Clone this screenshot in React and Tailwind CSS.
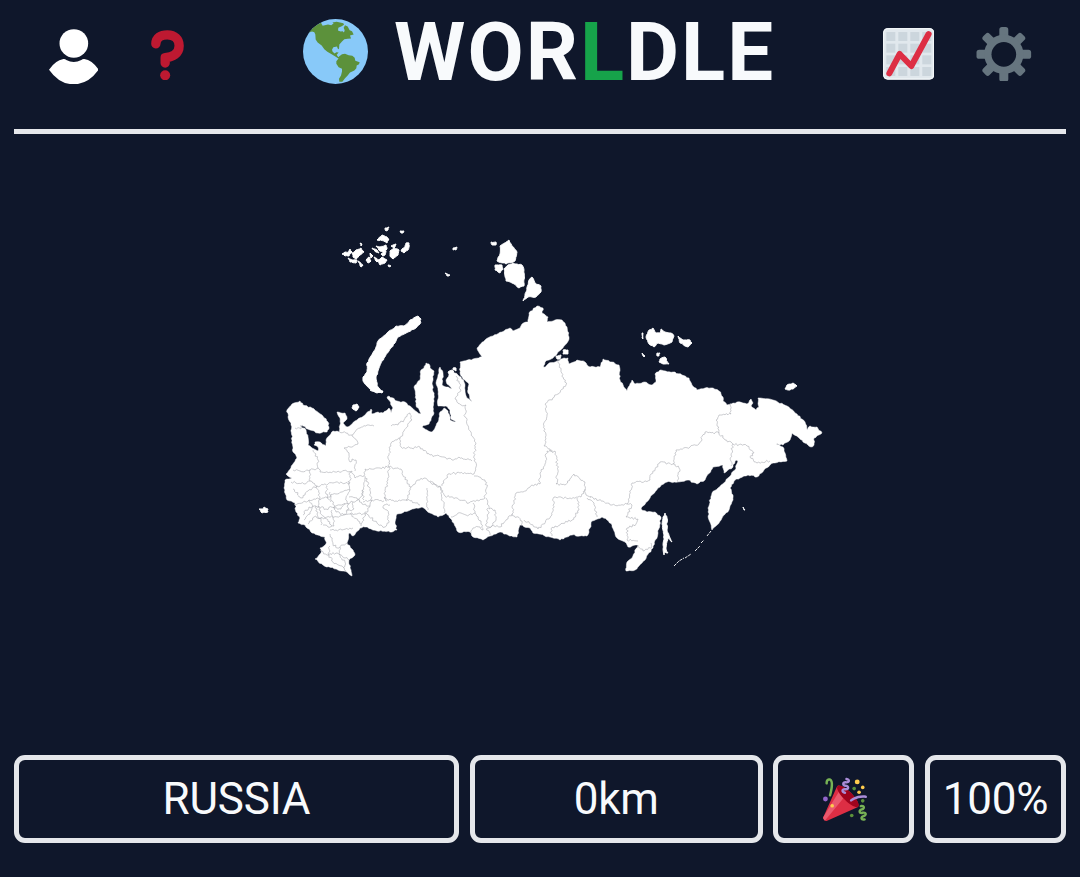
import React from "react";

/* ---------- map geometry ---------- */

const MAINLAND =
  "287,410 292,404 300,401 303,405 312,408 322,415 328,422 329,427 327,432 318,433 310,430 303,426 300,425 306,430 308,437 308,445 312,448 318,451 318,447 314,445 315,442 320,442 326,446 326,440 330,435 333,431 339,432 340,425 340,418 337,412 345,413 347,419 343,423 347,427 352,424 357,420 365,415 371,409 372,414 378,412 383,413 389,408 391,413 393,408 387,397 389,396 397,401 405,402 410,406 417,412 421,414 416,405 415,390 414,387 420,380 421,370 424,368 426,363 429,364 430,368 434,371 432,384 434,395 433,407 434,413 429,424 422,427 427,430 432,432 438,422 440,412 444,408 448,411 450,420 456,422 451,419 450,410 446,406 438,406 438,390 436,383 438,375 440,367 443,373 442,385 446,387 452,389 447,384 446,380 449,374 455,373 461,377 464,382 465,390 467,398 472,402 468,393 469,384 463,379 460,373 460,362 473,359 482,357 477,348 485,340 493,336 502,332 510,328 513,331 520,328 522,324 528,322 529,313 537,306 543,308 542,313 548,317 547,322 555,320 562,320 567,327 569,337 567,343 558,352 553,358 545,362 542,369 548,364 557,361 564,358 568,358 569,364 577,360 585,362 587,365 590,367 600,367 603,359 612,362 619,365 620,380 627,391 632,380 635,384 645,382 652,385 656,382 655,374 660,370 673,372 682,375 689,378 692,385 697,390 705,388 713,388 719,391 723,397 723,401 727,405 737,402 747,404 751,399 753,403 751,406 756,410 759,407 758,398 773,400 787,406 797,414 805,422 807,430 810,426 817,427 822,433 814,438 814,445 811,447 803,442 798,437 792,433 790,440 783,445 776,444 783,447 785,453 787,461 773,463 764,470 757,477 748,475 740,478 735,480 730,488 733,495 733,500 729,510 722,518 717,525 712,530 709,520 708,508 712,493 718,488 728,478 735,470 738,461 735,461 733,467 724,473 723,465 713,467 705,480 697,484 688,480 678,482 667,482 658,488 650,498 641,509 647,512 655,512 661,517 658,533 653,548 642,563 635,570 626,571 627,562 632,558 638,545 628,547 625,542 617,538 612,525 607,520 602,517 592,521 590,528 587,536 580,536 572,535 560,540 550,537 533,533 530,528 520,525 517,537 508,535 500,532 490,536 483,540 473,537 470,532 458,532 452,520 446,513 438,517 430,513 422,507 397,514 395,522 397,530 392,532 377,531 365,527 360,528 353,536 349,533 347,543 353,550 355,555 349,560 350,568 352,576 347,572 338,570 323,565 315,559 321,553 320,548 326,544 325,537 312,533 305,525 298,523 300,518 296,512 295,503 287,500 284,488 285,480 292,478 286,474 297,458 293,452 291,423 288,417";

const ISLANDS = [
  /* Novaya Zemlya */
  "418,316 421,319 420,324 416,328 408,332 398,337 395,343 389,351 384,358 379,368 376,378 378,387 383,392 377,393 370,389 367,386 363,381 363,377 367,372 367,363 371,356 376,347 378,341 387,333 396,326 404,326 410,320",
  /* Severnaya Zemlya */
  "509,240 512,246 517,252 515,261 506,264 497,261 500,254 500,246",
  "495,265 502,265 503,269 500,273 495,270",
  "504,269 508,265 513,263 517,264 522,265 524,270 524,286 519,288 512,283 506,281",
  "532,277 535,283 541,286 541,292 536,297 528,297 523,301 526,292 529,280",
  "491,242 496,242 496,245 492,245",
  "453,248 457,247 456,250 453,250",
  "445,273 450,275 447,276",
  /* New Siberian Islands */
  "649,330 653,328 656,333 660,333 661,329 665,332 671,333 674,336 672,342 664,345 658,343 654,347 649,344 646,337",
  "678,336 683,340 690,340 692,343 688,347 680,343",
  "642,333 643,333 643,339 642,338",
  "642,353 645,356 644,357",
  "657,353 660,353 659,356 657,356",
  "660,359 665,357 669,364 663,364 659,362",
  /* Wrangel */
  "785,389 787,385 793,383 797,386 793,389 788,390",
  /* Kolguyev, Vaygach */
  "353,405 357,404 359,407 356,411 352,408",
  "370,390 377,391 383,391 382,393 376,392",
  /* Taymyr coast */
  "563,350 568,350 568,354 563,354",
  "556,356 561,355 560,359 557,359",
  "448,372 452,370 454,372 452,375 449,374",
  "453,368 456,368 456,371 453,370",
  /* Kaliningrad */
  "259,509 263,509 264,507 268,509 268,512 262,513",
  /* Sakhalin */
  "665,513 667,518 667,530 672,542 668,538 666,549 668,553 665,552 664,555 663,549 664,535 662,524 663,517",
  /* Commander Islands */
  "743,507 745,510 744,510",
];

const KURILS = ["707,536 711,531", "701,543 704,540", "695,551 700,546", "685,558 691,554", "674,566 679,561 684,558"];

const FRANZ_JOSEF =
  "342,254 345,252 348,253 350,249 352,252 349,256 345,256;352,253 356,250 361,248 364,252 360,255 356,259 353,257;348,258 352,260 357,260 356,263 350,262;360,243 362,244 361,246;358,261 363,265 361,267;366,260 369,257 371,261 368,263;372,248 377,250 379,253 376,252;376,246 380,247 386,245 387,249 384,253 380,251;377,240 382,235 387,237 389,240 384,241;385,228 389,227 388,230 386,231;400,231 404,231 403,233 401,233;391,246 396,244 394,248;390,251 394,248 399,250 398,255 393,259 390,256;402,249 405,247 406,243 409,243 409,247 408,250 404,253 401,251;378,261 382,257 387,260 385,263 380,265;388,265 391,266 389,267;370,253 373,256 371,258;381,254 386,251 385,255 383,256;384,241 388,238 387,243;374,257 379,260 377,262".split(
    ";"
  );

const BORDERS = [
  "295,428 301,429 303,425",
  "313,450 318,460 318,468 310,470 300,471 293,470",
  "318,468 320,472 335,472 352,471 355,478 364,476 365,469 371,469 380,468 389,467",
  "338,431 352,435 360,428 367,425 374,426",
  "352,435 358,444 350,447 344,448 349,455 350,462 352,459 356,460 355,471",
  "391,426 398,425 404,420 410,413 412,420 404,431 400,438 391,443 389,455 389,467 388,480 384,498 387,501",
  "400,438 401,447 410,448 420,447 430,455 444,457 452,460 459,457 472,461",
  "389,467 401,469 407,482 411,487 408,497 407,501",
  "411,487 418,480 424,478 431,483 441,488",
  "441,488 442,498 444,506 444,513",
  "384,498 396,501 407,500 420,505",
  "427,488 427,500 428,510",
  "456,376 459,383 461,390 455,399 461,405 466,405 465,417 471,432 476,444 474,456 476,467 474,474 460,473 448,474 442,486",
  "430,481 441,488 445,496 457,498 469,503 485,498 487,487 485,480 474,476",
  "473,503 475,513 481,521 483,530 480,527 473,528 471,533",
  "451,517 461,513 466,515 475,513",
  "486,498 489,509 495,510 496,520 492,526 487,528 490,535",
  "488,508 488,518 486,526 500,527 512,514 522,521 521,526",
  "512,514 514,502 516,493 523,492 532,485 540,484 540,473 545,464 547,451",
  "558,360 561,370 566,385 558,394 545,404 547,415 544,426 546,442 544,446 550,449 553,453",
  "547,451 555,451 558,470 556,484 565,485 574,474 580,479 585,482 586,495 591,497",
  "585,489 581,497 570,498 554,497 552,515 538,529 524,520",
  "577,498 579,510 572,520 560,525 551,529 552,536",
  "587,498 594,503 597,517",
  "590,497 603,501 612,505 627,504 632,505",
  "731,403 731,414 719,415 716,420 719,430 719,433 705,432 699,444 690,447 676,450 673,464 660,462 651,474 650,480 632,483 627,504",
  "719,433 725,440 733,444 747,446 754,453 750,457 757,463 770,461",
  "733,444 731,455 731,466",
  "673,464 679,468 678,482",
  "632,505 626,517 638,519 636,524 627,528 627,540 638,541",
  "638,545 643,551 652,547 651,543",
  "291,482 304,484 310,481 317,486 333,483 350,483 350,471",
  "293,489 301,498 308,491 317,486 320,498 319,510 325,518 332,526",
  "310,481 310,470",
  "295,505 309,500 324,498 336,494 350,490 348,481",
  "303,515 309,507 316,506 326,509 340,505 353,502 361,497 365,478",
  "308,524 314,517 325,518 340,516 350,514 365,514 370,506 372,501 369,487 365,476",
  "350,490 346,498 349,509 344,515 336,512 332,501 330,492",
  "309,500 313,506 310,514 304,520",
  "316,506 317,514 321,520 321,525",
  "332,510 333,518 334,526 328,527 323,525",
  "350,514 358,521 361,526",
  "361,524 366,513 377,523 385,527 389,521 387,510 383,508 384,505 390,505",
  "363,502 372,500 384,501",
  "370,506 362,504 357,498 349,497",
  "330,530 342,530 353,528",
  "330,534 333,544 337,548 343,545 347,543",
  "320,550 327,555 336,553 345,558 349,560",
  "330,546 328,554 333,562 342,566 346,571",
  "340,547 339,554 345,562 343,568",
  "327,486 326,494 331,502",
  "362,490 364,500",
  "345,503 341,509 333,507",
  "353,502 354,509 347,511",
];

// Deterministic noise in the range -0.5 .. 0.5
const noise = (n) => {
  const s = Math.sin(n * 127.1 + 11.7) * 43758.5453;
  return s - Math.floor(s) - 0.5;
};

// Subdivide each segment and push the new points sideways for a natural coast
function rough(points, amount, closed, step = 1.6) {
  const p = points.split(" ").map((s) => s.split(",").map(Number));
  const out = [];
  const count = closed ? p.length : p.length - 1;
  for (let i = 0; i < count; i++) {
    const [ax, ay] = p[i];
    const [bx, by] = p[(i + 1) % p.length];
    const len = Math.hypot(bx - ax, by - ay) || 1;
    const n = Math.max(1, Math.round(len / step));
    for (let k = 0; k < n; k++) {
      const t = k / n;
      const d = k === 0 ? 0 : noise(ax * 3 + ay * 7 + k) * amount * 2;
      out.push(
        (ax + (bx - ax) * t - ((by - ay) / len) * d).toFixed(1) +
          "," +
          (ay + (by - ay) * t + ((bx - ax) / len) * d).toFixed(1)
      );
    }
  }
  if (!closed) out.push(p[p.length - 1].join(","));
  return out.join(" ");
}

function CountryMap() {
  return (
    <svg viewBox="250 215 580 370" className="h-[370px] w-[580px]" aria-label="Country shape">
      <g fill="#ffffff" stroke="#ffffff">
        <polygon points={rough(MAINLAND, 0.7, true, 2)} strokeWidth="0.5" />
        {ISLANDS.map((pts, i) => (
          <polygon key={i} points={rough(pts, 0.5, true, 2)} strokeWidth="0.9" />
        ))}
        {FRANZ_JOSEF.map((pts, i) => (
          <polygon key={i} points={rough(pts, 0.4, true)} strokeWidth="1" />
        ))}
      </g>
      <g fill="none" stroke="#ffffff" strokeWidth="0.9" strokeDasharray="3 0.8">
        {KURILS.map((pts, i) => (
          <polyline key={i} points={pts} />
        ))}
      </g>
      <g fill="none" stroke="#a9abb1" strokeWidth="0.6">
        {BORDERS.map((pts, i) => (
          <polyline key={i} points={rough(pts, 1.2, false)} />
        ))}
      </g>
    </svg>
  );
}

/* ---------- icons ---------- */

function UserIcon() {
  return (
    <svg viewBox="86 86 149 166" className="h-[55.3px] w-[49.7px]">
      <g fill="#ffffff">
        <circle cx="160.500" cy="129.500" r="43" />
        <path d="M86 208Q105 180 129 176Q134 175 138 179Q160 191 183 179Q187 175 192 176Q216 180 235 208Q204 252 160.500 252Q117 252 86 208Z" />
      </g>
    </svg>
  );
}

function QuestionIcon() {
  return (
    <svg viewBox="392 89 99 151" className="h-[50.3px] w-[33px]">
      <path
        d="M406.500 130.500C407 112 421 103.500 441 103.500C463 103.500 476.500 117 476.500 136C476.500 160 457 170 434.500 172V188"
        fill="none"
        stroke="#BE1931"
        strokeWidth="28"
        strokeLinecap="round"
        strokeLinejoin="round"
      />
      <circle cx="434.500" cy="225" r="15" fill="#BE1931" />
    </svg>
  );
}

function GlobeIcon() {
  return (
    <svg viewBox="849 56.500 195 195" className="size-[65px]">
      <circle cx="946.500" cy="154" r="97.500" fill="#88C9F9" />
      <g fill="#5C913B">
        <path d="M867 97Q883 77 903 68L908 77L924 73L934 75L941 69L937 67L950 65L970 69L972 74L965 78L955 83L954 91L962 94L968 93L972 97L974 90L971 83L975 75L983 79L989 90L996 93L1001 103L990 106L993 115L983 116L973 117L966 124L958 133L957 147L953 145L951 139L940 141L936 149L938 155L944 160L949 156L956 157L950 164L954 170L960 172L955 175L946 169L935 162L922 155L913 147L905 136L893 127L887 118L886 103L883 96L876 94Z" />
        <path d="M957 169L966 162L975 161L986 165L997 167L1004 173L1006 182L1019 186L1017 192L1010 196L1009 204L1003 211L990 217L983 226L975 234L967 245L958 245L957 236L963 226L966 214L966 206L956 201L949 191L949 183L955 176Z" />
      </g>
    </svg>
  );
}

function ChartIcon() {
  const cells = [77, 113, 149, 185];
  const rows = [66, 101, 136, 171];
  return (
    <svg viewBox="67 54 154 155" className="h-[51.7px] w-[51.3px]">
      <rect x="67" y="54" width="154" height="155" rx="14" fill="#E1E8ED" />
      <rect x="69" y="56" width="150" height="151" rx="12" fill="none" stroke="#F5F8FA" strokeWidth="3" />
      <g fill="#CCD6DD">
        {cells.map((x) => rows.map((y) => <rect key={x + "-" + y} x={x} y={y} width="27" height="27" />))}
      </g>
      <path d="M86 190L117 132L152 168L204 72" fill="none" stroke="#DD2E44" strokeWidth="18" strokeLinecap="round" strokeLinejoin="round" />
    </svg>
  );
}

function GearIcon() {
  return (
    <svg viewBox="347 50 166 164" className="h-[54.7px] w-[55.3px]">
      <g fill="#66757F">
        {[0, 45, 90, 135].map((a) => (
          <rect key={a} x="417" y="50" width="27" height="164" rx="8" transform={`rotate(${a} 430.500 132)`} />
        ))}
        <circle cx="430.500" cy="132" r="59" />
      </g>
      <circle cx="430.500" cy="132" r="37" fill="#0f172a" />
    </svg>
  );
}

function PartyIcon() {
  return (
    <svg viewBox="0 0 36 36" className="ml-[3px] size-11">
      <path fill="#DD2E44" d="M11.626 7.488c-.112.112-.197.247-.268.395l-.008-.008L.134 33.141l.011.011c-.208.403.14 1.223.853 1.937.713.713 1.533 1.061 1.936.853l.01.01L28.21 24.735l-.008-.009c.147-.07.282-.155.395-.269 1.562-1.562-.971-6.627-5.656-11.313-4.687-4.686-9.752-7.218-11.315-5.656z" />
      <path fill="#EA596E" d="M13 12L.416 32.506l-.282.635.011.011c-.208.403.14 1.223.853 1.937.232.232.473.408.709.557L17 17l-4-5z" />
      <path fill="#A0041E" d="M23.012 13.066c4.67 4.672 7.263 9.652 5.789 11.124-1.473 1.474-6.453-1.118-11.126-5.788-4.671-4.672-7.263-9.654-5.79-11.127 1.474-1.473 6.454 1.119 11.127 5.791z" />
      <path fill="#AA8DD8" d="M18.59 13.609c-.199.161-.459.245-.734.215-.868-.094-1.598-.396-2.109-.873-.541-.505-.808-1.183-.735-1.862.128-1.192 1.324-2.286 3.363-2.066.793.085 1.147-.17 1.159-.292.014-.121-.277-.446-1.07-.532-.868-.094-1.598-.396-2.11-.873-.541-.505-.809-1.183-.735-1.862.13-1.192 1.325-2.286 3.362-2.065.578.062.883-.057 1.012-.134.103-.063.144-.123.148-.158.012-.121-.275-.446-1.07-.532-.549-.06-.947-.552-.886-1.102.059-.549.55-.946 1.101-.886 2.037.219 2.973 1.542 2.844 2.735-.13 1.194-1.325 2.286-3.364 2.067-.578-.063-.88.057-1.01.134-.103.062-.145.123-.149.157-.013.122.276.446 1.071.532 2.037.22 2.973 1.542 2.844 2.735-.129 1.192-1.324 2.286-3.362 2.065-.578-.062-.882.058-1.012.134-.104.064-.144.124-.148.158-.013.121.276.446 1.07.532.548.06.947.553.886 1.102-.028.274-.167.511-.366.671z" />
      <path fill="#77B255" d="M30.661 22.857c1.973-.557 3.334.323 3.658 1.478.324 1.154-.378 2.615-2.35 3.17-.77.216-1.001.584-.97.701.034.118.425.312 1.193.095 1.972-.555 3.333.325 3.657 1.479.326 1.155-.378 2.614-2.351 3.17-.769.216-1.001.585-.967.702.033.117.423.311 1.192.095.53-.149 1.084.16 1.233.691.148.532-.161 1.084-.693 1.234-1.971.555-3.333-.323-3.659-1.479-.324-1.154.379-2.613 2.353-3.169.77-.217 1.001-.584.967-.702-.032-.117-.422-.312-1.19-.096-1.974.556-3.334-.322-3.659-1.479-.325-1.154.378-2.613 2.351-3.17.768-.215.999-.585.967-.701-.034-.118-.423-.312-1.192-.096-.532.15-1.083-.16-1.233-.691-.149-.53.161-1.082.693-1.232z" />
      <path fill="#AA8DD8" d="M23.001 20.16c-.294 0-.584-.129-.782-.375-.345-.432-.274-1.061.156-1.406.218-.175 5.418-4.259 12.767-3.208.547.078.927.584.849 1.131-.078.546-.58.93-1.132.848-6.493-.922-11.187 2.754-11.233 2.791-.186.148-.406.219-.625.219z" />
      <path fill="#77B255" d="M5.754 16c-.095 0-.192-.014-.288-.042-.529-.159-.829-.716-.67-1.245 1.133-3.773 2.16-9.794.898-11.364-.141-.178-.354-.353-.842-.316-.938.072-.849 2.051-.848 2.071.042.551-.372 1.031-.922 1.072-.559.034-1.031-.372-1.072-.923-.103-1.379.326-4.035 2.692-4.214 1.056-.08 1.933.287 2.552 1.057 2.371 2.951-.036 11.506-.542 13.192-.13.433-.528.712-.958.712z" />
      <g fill="#5C913B">
        <circle cx="25.500" cy="9.500" r="1.500" />
        <circle cx="32.500" cy="19.500" r="1.500" />
        <circle cx="23.500" cy="31.500" r="1.500" />
      </g>
      <circle fill="#9266CC" cx="2" cy="18" r="2" />
      <g fill="#FFCC4D">
        <circle cx="28" cy="4" r="2" />
        <circle cx="32.500" cy="8.500" r="1.500" />
        <circle cx="29.500" cy="12.500" r="1.500" />
        <circle cx="7.500" cy="23.500" r="1.500" />
      </g>
    </svg>
  );
}

/* ---------- page ---------- */

function Cell({ children }) {
  return (
    <div className="flex h-[88px] items-center justify-center rounded-[11px] border-[5px] border-gray-200 whitespace-nowrap">
      {children}
    </div>
  );
}

export default function App() {
  return (
    <div className="flex h-[877px] w-[1080px] flex-col overflow-hidden bg-slate-900 px-3.5 font-['Roboto',sans-serif] text-slate-50">
      <header className="flex h-[134px] items-start justify-between border-b-[5px] border-gray-200 pr-[34.5px] pl-[34.6px]">
        <div className="flex w-[254.4px] gap-[52.7px] pt-[28.7px]">
          <UserIcon />
          <div className="pt-[1px]">
            <QuestionIcon />
          </div>
        </div>
        <div className="flex flex-1 gap-[26px]">
          <div className="pt-[18.8px]">
            <GlobeIcon />
          </div>
          <h1 className="pt-[4px] text-[81.6px] leading-[96px] font-bold tracking-[2px]">
            WOR<span className="text-[#16a34a]">L</span>DLE
          </h1>
        </div>
        <div className="flex gap-[42px] pt-[26.7px]">
          <div className="pt-[1.6px]">
            <ChartIcon />
          </div>
          <GearIcon />
        </div>
      </header>
      <main className="flex h-[621px] items-start justify-center pt-[81px]">
        <CountryMap />
      </main>
      <section className="grid grid-cols-[445px_293px_141px_141px] justify-between text-[44px] leading-[52px] tracking-[-0.2px]">
        <Cell>RUSSIA</Cell>
        <Cell>0km</Cell>
        <Cell>
          <PartyIcon />
        </Cell>
        <Cell>100%</Cell>
      </section>
    </div>
  );
}
